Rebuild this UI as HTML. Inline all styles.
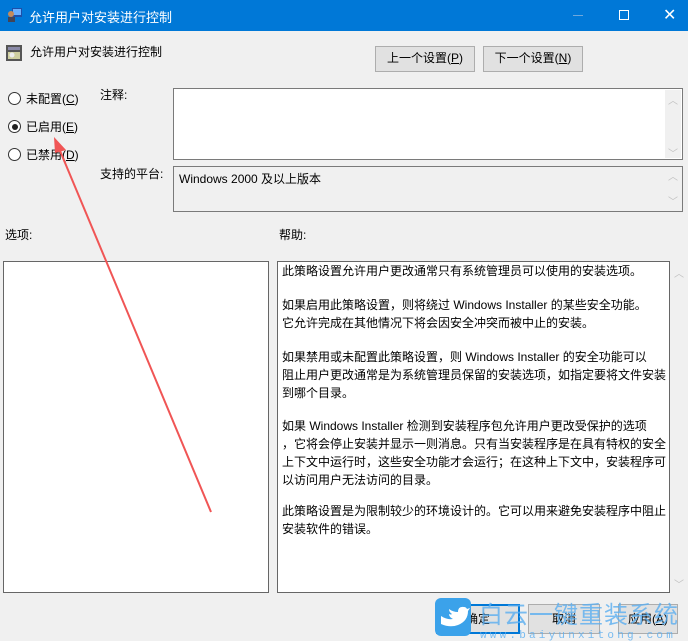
<!DOCTYPE html>
<html><head><meta charset="utf-8"><style>
*{margin:0;padding:0;box-sizing:border-box}
body{width:688px;height:641px;background:#f0f0f0;position:relative;overflow:hidden;font-family:"Liberation Sans","Noto Sans CJK SC",sans-serif;font-size:12px;color:#000}
.a{position:absolute;white-space:nowrap}
.box{position:absolute;border:1px solid #7a7a7a;background:#fff}
.btn{position:absolute;border:1px solid #adadad;background:#e1e1e1;text-align:center;line-height:23px;font-size:12px}
.sb{position:absolute;background:#f0f0f0;color:#c0c0c0;font-size:10px;text-align:center}
.r{position:absolute;width:13px;height:13px;border:1px solid #333;border-radius:50%;background:#fff}
.h{position:absolute;left:282px;white-space:nowrap;font-size:12px;line-height:18px}
</style></head><body>
<div class="a" style="left:0;top:0;width:688px;height:31px;background:#0078d7"></div>
<svg class="a" style="left:7px;top:7px" width="16" height="16"><rect x="5" y="1" width="10" height="9" fill="#1e4fa8"/><rect x="6" y="2" width="8" height="6" fill="#6ab0ff"/><circle cx="4" cy="7" r="3" fill="#c58a5a"/><rect x="1" y="10" width="7" height="5" fill="#445"/></svg>
<div class="a" style="left:29px;top:7px;color:#fff;font-size:13px">允许用户对安装进行控制</div>
<div class="a" style="left:573px;top:15px;width:10px;height:1px;background:#6fa8dc"></div>
<div class="a" style="left:619px;top:10px;width:10px;height:10px;border:1px solid #fff"></div>
<div class="a" style="left:663px;top:5px;color:#fff;font-size:16px">✕</div>
<svg class="a" style="left:6px;top:45px" width="16" height="16"><rect x="0" y="0" width="16" height="16" fill="#555"/><rect x="2" y="2" width="12" height="3" fill="#8a8aa8"/><rect x="2" y="7" width="12" height="7" fill="#cfcfa0"/><circle cx="6" cy="10" r="2.5" fill="#eee"/></svg>
<div class="a" style="left:30px;top:43px;font-size:12px">允许用户对安装进行控制</div>
<div class="btn" style="left:375px;top:46px;width:100px;height:26px">上一个设置(<u>P</u>)</div>
<div class="btn" style="left:483px;top:46px;width:100px;height:26px">下一个设置(<u>N</u>)</div>
<div class="r" style="left:8px;top:92px"></div><div class="a" style="left:26px;top:90px">未配置(<u>C</u>)</div>
<div class="r" style="left:8px;top:120px"></div><div class="a" style="left:12px;top:124px;width:6px;height:6px;border-radius:50%;background:#222"></div><div class="a" style="left:26px;top:118px">已启用(<u>E</u>)</div>
<div class="r" style="left:8px;top:148px"></div><div class="a" style="left:26px;top:146px">已禁用(<u>D</u>)</div>
<div class="a" style="left:100px;top:86px">注释:</div>
<div class="box" style="left:173px;top:88px;width:510px;height:72px"></div>
<div class="sb" style="left:665px;top:90px;width:16px;height:68px"><div style="margin-top:2px">︿</div><div style="margin-top:38px">﹀</div></div>
<div class="a" style="left:100px;top:165px">支持的平台:</div>
<div class="box" style="left:173px;top:166px;width:510px;height:46px;background:#f0f0f0"></div>
<div class="a" style="left:179px;top:170px;font-size:12px">Windows 2000 及以上版本</div>
<div class="sb" style="left:665px;top:168px;width:16px;height:42px;background:#f0f0f0"><div>︿</div><div style="margin-top:10px">﹀</div></div>
<div class="a" style="left:5px;top:226px">选项:</div>
<div class="a" style="left:279px;top:226px">帮助:</div>
<div class="box" style="left:3px;top:261px;width:266px;height:332px;border-color:#666"></div>
<div class="box" style="left:277px;top:261px;width:393px;height:332px;border-color:#666"></div>
<div class="sb" style="left:671px;top:262px;width:16px;height:330px"><div style="margin-top:3px">︿</div><div style="margin-top:296px">﹀</div></div>
<div class="h" style="top:262px">此策略设置允许用户更改通常只有系统管理员可以使用的安装选项。</div>
<div class="h" style="top:296px">如果启用此策略设置，则将绕过 Windows Installer 的某些安全功能。</div>
<div class="h" style="top:314px">它允许完成在其他情况下将会因安全冲突而被中止的安装。</div>
<div class="h" style="top:348px">如果禁用或未配置此策略设置，则 Windows Installer 的安全功能可以</div>
<div class="h" style="top:366px">阻止用户更改通常是为系统管理员保留的安装选项，如指定要将文件安装</div>
<div class="h" style="top:384px">到哪个目录。</div>
<div class="h" style="top:417px">如果 Windows Installer 检测到安装程序包允许用户更改受保护的选项</div>
<div class="h" style="top:435px">，它将会停止安装并显示一则消息。只有当安装程序是在具有特权的安全</div>
<div class="h" style="top:453px">上下文中运行时，这些安全功能才会运行；在这种上下文中，安装程序可</div>
<div class="h" style="top:471px">以访问用户无法访问的目录。</div>
<div class="h" style="top:502px">此策略设置是为限制较少的环境设计的。它可以用来避免安装程序中阻止</div>
<div class="h" style="top:520px">安装软件的错误。</div>
<div class="btn" style="left:436px;top:604px;width:84px;height:30px;border:2px solid #0078d7;line-height:26px">确定</div>
<div class="btn" style="left:528px;top:604px;width:72px;height:30px;line-height:28px">取消</div>
<div class="btn" style="left:618px;top:604px;width:60px;height:30px;line-height:28px">应用(<u>A</u>)</div>
<svg class="a" style="left:0;top:0" width="688" height="641">
<line x1="211" y1="512" x2="58" y2="146" stroke="#f05555" stroke-width="2"/>
<polygon points="54,137 66,150 55,153" fill="#f05555"/>
<rect x="435" y="598" width="36" height="38" rx="6" fill="#3ba2ea"/>
<path d="M441 616 q6 4 12 3 q-4 -2 -4 -5 q2 1 3 0 q-3 -2 -3 -5 q4 3 9 3 q0 -6 6 -5 q2 0 3 2 l3 -1 l-2 3 q0 10 -10 14 q-8 3 -17 -1z" fill="#fff"/>
<text x="479" y="623" font-family="Noto Sans CJK SC,sans-serif" font-size="24" fill="#5aaef0" fill-opacity="0.8" letter-spacing="1">白云一键重装系统</text>
<text x="480" y="638" font-family="Liberation Mono,monospace" font-size="11" fill="#5aaef0" fill-opacity="0.8" letter-spacing="3.2">www.baiyunxitong.com</text>
</svg>
</body></html>
